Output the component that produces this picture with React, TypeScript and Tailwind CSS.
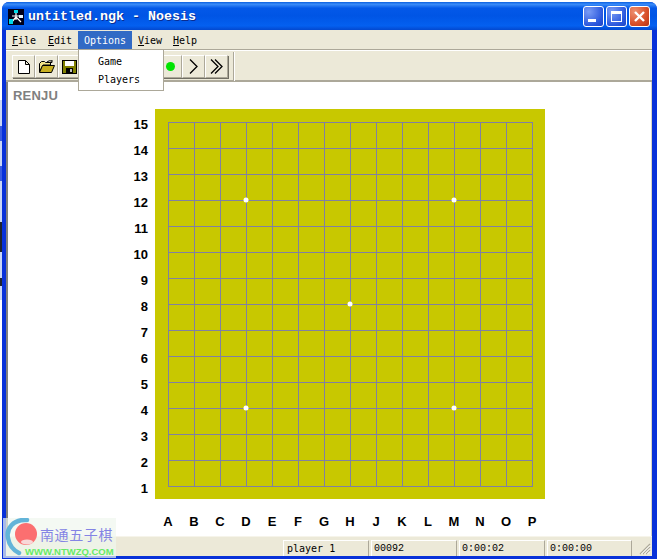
import React from "react";

const ranks = [15,14,13,12,11,10,9,8,7,6,5,4,3,2,1];
const files = "ABCDEFGHJKLMNOP".split("");
const menus = [
  { label: "File", w: "w-[36px]" },
  { label: "Edit", w: "w-[32px]" },
];

function ToolBtn({ children }: { children: React.ReactNode }) {
  return (
    <div className="w-[23px] h-[23px] flex items-center justify-center bg-[#ece9d8] border border-t-white border-l-white border-r-[#aca899] border-b-[#aca899] shadow-[1px_1px_0_#716f64]">
      {children}
    </div>
  );
}

function Panel({ w, children }: { w: string; children: React.ReactNode }) {
  return (
    <div className={`${w} h-[16px] shrink-0 flex items-center pl-[2px] border-t border-l border-r border-t-white border-l-white border-r-[#aca899] text-[10px] text-black font-['Liberation_Mono',monospace]`}>
      {children}
    </div>
  );
}

function CaptionBtn({ bg, children }: { bg: string; children: React.ReactNode }) {
  return (
    <div className={`w-[21px] h-[21px] rounded-[3px] border border-white flex items-center justify-center ${bg}`}>
      {children}
    </div>
  );
}

export default function App() {
  return (
    <div className="relative w-[657px] h-[560px] overflow-hidden bg-white font-['Liberation_Sans',sans-serif]">
      {/* desktop scraps visible at the left edge */}
      <div className="absolute left-0 top-[100px] w-[2px] h-[200px] bg-[#c9d6f4]" />
      <div className="absolute left-0 top-[126px] w-[2px] h-[15px] bg-[#3a5ce0]" />
      <div className="absolute left-0 top-[166px] w-[2px] h-[15px] bg-[#3a5ce0]" />
      <div className="absolute left-0 top-[222px] w-[2px] h-[30px] bg-[#20242c]" />
      <div className="absolute left-0 top-[278px] w-[2px] h-[8px] bg-[#20242c]" />

      <div className="ml-[2px] w-[655px] h-[559px] pt-[2px]">
        <div className="h-full flex flex-col rounded-t-[7px] bg-[#0831d9] overflow-hidden">
          {/* Title bar */}
          <div className="h-[28px] shrink-0 flex items-center pl-[6px] pr-[7px] bg-[linear-gradient(to_bottom,#0a5fe0_0%,#3b8cf8_8%,#0458e8_22%,#0055e5_50%,#0460f0_85%,#0348cf_100%)]">
            <svg width="16" height="16" viewBox="0 0 16 16" className="shrink-0 mt-[1px]">
              <rect width="16" height="16" fill="#000018" />
              <path d="M8 2v9M4 7h9M3 14l5-6 5 5" stroke="#fff" strokeWidth="1.2" fill="none" />
              <rect x="1" y="10" width="4" height="5" fill="#00d8e8" />
              <rect x="6" y="1" width="4" height="3" fill="#00d8e8" />
              <rect x="11" y="6" width="4" height="3" fill="#e8f8ff" />
            </svg>
            <span className="ml-[4px] mt-[2px] flex-1 text-white font-bold text-[13.33px] font-['Liberation_Mono',monospace] whitespace-pre [text-shadow:1px_1px_0_#0a2c90]">untitled.ngk - Noesis</span>
            <div className="flex gap-[2px] mt-[1px]">
              <CaptionBtn bg="bg-[radial-gradient(circle_at_25%_25%,#7a9cf5,#2a56dc_70%,#1d44c4)]">
                <div className="w-[8px] h-[3px] bg-white mt-[7px] -ml-[3px]" />
              </CaptionBtn>
              <CaptionBtn bg="bg-[radial-gradient(circle_at_25%_25%,#7a9cf5,#2a56dc_70%,#1d44c4)]">
                <div className="w-[11px] h-[11px] border border-white border-t-[3px]" />
              </CaptionBtn>
              <CaptionBtn bg="bg-[radial-gradient(circle_at_25%_25%,#ee9070,#d8502a_60%,#b83412)]">
                <svg width="13" height="13" viewBox="0 0 13 13">
                  <path d="M2 2l9 9M11 2l-9 9" stroke="#fff" strokeWidth="2.4" />
                </svg>
              </CaptionBtn>
            </div>
          </div>

          {/* Client area */}
          <div className="flex-1 min-h-0 ml-[4px] mr-[5px] mb-[3px] flex flex-col bg-[#ece9d8]">
            {/* Menu bar */}
            <div className="h-[20px] shrink-0 flex items-center pl-[4px] text-[10px] text-black font-['DejaVu_Sans_Mono',monospace] border-b border-b-[#aca899]">
              {menus.map((m) => (
                <div key={m.label} className={`${m.w} pl-[2px] pt-[2px]`}>
                  <span className="underline">{m.label[0]}</span>{m.label.slice(1)}
                </div>
              ))}
              <div className="w-[54px] h-[18px] pt-[2px] flex items-center justify-center bg-[#316ac5] text-white">Options</div>
              <div className="w-[41px] pl-[6px] pt-[2px]"><span className="underline">V</span>iew</div>
              <div className="pt-[2px]"><span className="underline">H</span>elp</div>
            </div>
            {/* Toolbar */}
            <div className="h-[32px] shrink-0 flex items-center pl-[6px] pt-[2px] border-t border-t-white border-b-2 border-b-[#aca899]">
              <div className="flex">
                <ToolBtn>
                  <svg width="12" height="14" viewBox="0 0 12 14">
                    <path d="M.5.5h7l4 4v9h-11zM7.500.5v4h4" fill="#fff" stroke="#000" />
                  </svg>
                </ToolBtn>
                <ToolBtn>
                  <svg width="16" height="13" viewBox="0 0 16 13">
                    <path d="M.5 3.500l2-2h3l1 1h5v2.500H4l-3.500 7z" fill="#f4e68a" stroke="#000" />
                    <path d="M.5 12.500l3-7h12l-3 7z" fill="#c8b020" stroke="#000" />
                    <path d="M8 2q2-2 5-1M13 0v2.500h-2.500" fill="none" stroke="#000" />
                  </svg>
                </ToolBtn>
                <ToolBtn>
                  <svg width="15" height="14" viewBox="0 0 15 14">
                    <rect x=".5" y=".5" width="14" height="13" fill="#808000" stroke="#000" />
                    <rect x="3" y="1" width="9" height="5" fill="#fff" />
                    <rect x="4" y="8" width="7" height="5" fill="#000" />
                    <rect x="8" y="9" width="2" height="3" fill="#c0c0c0" />
                  </svg>
                </ToolBtn>
              </div>
              <div className="flex ml-[78px]">
                <ToolBtn><div className="w-[9px] h-[9px] rounded-full bg-[#00e400]" /></ToolBtn>
                <ToolBtn>
                  <svg width="9" height="15" viewBox="0 0 9 15"><path d="M1 .500l7 7-7 7" fill="none" stroke="#000" strokeWidth="1.3" /></svg>
                </ToolBtn>
                <ToolBtn>
                  <svg width="13" height="15" viewBox="0 0 13 15"><path d="M1 .500l7 7-7 7M5 .500l7 7-7 7" fill="none" stroke="#000" strokeWidth="1.3" /></svg>
                </ToolBtn>
              </div>
              <div className="ml-[5px] w-[2px] h-[29px] border-l border-l-[#aca899] border-r border-r-white" />
            </div>

            {/* Document */}
            <div className="flex-1 min-h-0 bg-white border-l-2 border-l-[#808080] border-r border-r-[#d8d5c4] flex flex-col">
              <div className="h-[27px] pl-[5px] pt-[6px] text-[13px] leading-[15px] font-bold text-[#808080] tracking-[0.2px]">RENJU</div>
              <div className="flex items-start">
                <div className="w-[140px] mt-[3px] flex flex-col text-right text-[13px] font-bold text-black">
                  {ranks.map((r) => (
                    <div key={r} className="h-[26px] leading-[26px]">{r}</div>
                  ))}
                </div>
                <div className="ml-[7px] w-[390px] h-[390px] bg-[#c8c800]">
                  <svg width="390" height="390" viewBox="0 0 390 390">
                    {ranks.map((_, i) => (
                      <React.Fragment key={i}>
                        <line x1={13.5 + i * 26} y1="13" x2={13.5 + i * 26} y2="378" stroke="#8080a0" />
                        <line y1={13.5 + i * 26} x1="13" y2={13.5 + i * 26} x2="378" stroke="#8080a0" />
                      </React.Fragment>
                    ))}
                    {[[91,91],[299,91],[195,195],[91,299],[299,299]].map(([x, y]) => (
                      <circle key={`${x}-${y}`} cx={x} cy={y} r="2.5" fill="#fff" />
                    ))}
                  </svg>
                </div>
              </div>
              <div className="mt-[7px] ml-[147px] flex text-[13px] leading-[26px] font-bold text-black">
                {files.map((f) => (
                  <div key={f} className="w-[26px] text-center">{f}</div>
                ))}
              </div>
            </div>

            {/* Status bar */}
            <div className="h-[20px] shrink-0 flex items-end border-t border-t-[#f6f4ea] relative">
              <div className="ml-[277px] flex gap-[2px]">
                <Panel w="w-[86px]"><span className="pl-[1px] font-['DejaVu_Sans_Mono',monospace]">player 1</span></Panel>
                <Panel w="w-[86px]">00092</Panel>
                <Panel w="w-[86px]">0:00:02</Panel>
                <Panel w="w-[85px]">0:00:00</Panel>
              </div>
              <svg width="12" height="12" viewBox="0 0 12 12" className="absolute right-[1px] bottom-[1px]">
                <path d="M11 1L1 11M11 4L4 11M11 7L7 11" stroke="#aca899" strokeWidth="1.2" />
                <path d="M11 2.500L2.500 11M11 5.500L5.500 11M11 8.500L8.500 11" stroke="#fff" />
              </svg>
            </div>
          </div>
        </div>
      </div>

      {/* Options dropdown */}
      <div className="absolute left-[78px] top-[49px] w-[86px] h-[42px] bg-white border border-[#aca899] pl-[19px] text-[10px] leading-[18px] text-black font-['DejaVu_Sans_Mono',monospace]">
        <div className="pt-[3px]">Game</div>
        <div>Players</div>
      </div>

      {/* Watermark */}
      <div className="absolute left-[3px] top-[518px] w-[113px] h-[40px] bg-[#f0f6ee]/70">
        <svg width="40" height="40" viewBox="0 0 40 40" className="absolute left-0 top-0">
          <path d="M24 2C10 1 3 11 5 20c1 6 5 12 11 15" fill="none" stroke="#63b4d8" strokeWidth="4.500" strokeLinecap="round" />
          <circle cx="23" cy="16" r="11" fill="#fb6f70" />
          <ellipse cx="24" cy="24" rx="6" ry="2.500" fill="#f8d8d8" />
        </svg>
        <span className="absolute left-[37px] top-[7px] text-[14px] leading-[18px] tracking-[0.6px] text-[#8484e4] font-['Noto_Sans_CJK_SC',sans-serif] whitespace-nowrap">南通五子棋</span>
        <span className="absolute left-[22px] top-[28px] text-[9.500px] leading-[12px] font-bold text-[#66ea66] whitespace-nowrap">WWW.NTWZQ.COM</span>
      </div>
    </div>
  );
}
